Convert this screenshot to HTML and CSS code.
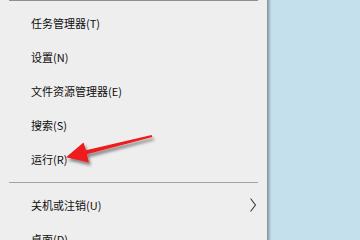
FILE: index.html
```html
<!DOCTYPE html>
<html lang="zh-CN">
<head>
<meta charset="utf-8">
<link rel="stylesheet" href="styles.css">
</head>
<body>
<div class="screen">
  <div class="menu">
    <div class="sep top"></div>
    <ul class="items">
      <li class="item">任务管理器(T)</li>
      <li class="item">设置(N)</li>
      <li class="item">文件资源管理器(E)</li>
      <li class="item">搜索(S)</li>
      <li class="item">运行(R)</li>
      <li class="sep-row"><div class="sep"></div></li>
      <li class="item sub"><span>关机或注销(U)</span>
        <svg class="chev" width="8" height="16" viewBox="0 0 8 16"><polyline points="1.5,1.5 6.5,8 1.5,14.5" fill="none" stroke="#3a3a3a" stroke-width="1.1"/></svg>
      </li>
      <li class="item">桌面(D)</li>
    </ul>
  </div>
  <div class="edge"></div>
  <div class="desktop"></div>
  <svg class="arrow" width="360" height="240" viewBox="0 0 360 240">
    <defs>
      <filter id="sh" x="-20%" y="-50%" width="140%" height="200%">
        <feDropShadow dx="2" dy="3" stdDeviation="1.6" flood-color="#000" flood-opacity="0.45"/>
      </filter>
    </defs>
    <polygon filter="url(#sh)" fill="#ee1a1a" points="151.6,134.9 86,150.2 83.5,142.6 66,157.2 89,162.4 86.8,154.3 152.4,137.1"/>
  </svg>
</div>
</body>
</html>
```
FILE: styles.css
```css
html, body {
  margin: 0;
  padding: 0;
  width: 360px;
  height: 240px;
  overflow: hidden;
}
.screen {
  position: relative;
  display: flex;
  width: 360px;
  height: 240px;
  overflow: hidden;
  font-family: "Noto Sans CJK SC", "Noto Sans", sans-serif;
}
.menu {
  width: 267px;
  background: #eeeeee;
  flex: none;
}
.sep {
  height: 1px;
  background: #a3a3a3;
  margin: 0 9px;
}
.sep.top {
  background: #8f8f8f;
}
.items {
  list-style: none;
  margin: 0;
  padding: 5px 0 0 0;
}
.item {
  height: 34px;
  display: flex;
  align-items: center;
  padding-left: 31px;
  padding-right: 10px;
  font-size: 11px;
  color: #0d0d0d;
  white-space: nowrap;
}
.item.sub {
  justify-content: space-between;
}
.sep-row {
  height: 12px;
  display: flex;
  flex-direction: column;
  justify-content: center;
}
.edge {
  width: 4px;
  flex: none;
  background: linear-gradient(to right, #8a8f92 0, #8f9ea6 25%, #a7bfca 60%, #bcd6e2 100%);
}
.desktop {
  flex: 1;
  background: #c4e0ec;
}
.arrow {
  position: absolute;
  left: 0;
  top: 0;
}
```
